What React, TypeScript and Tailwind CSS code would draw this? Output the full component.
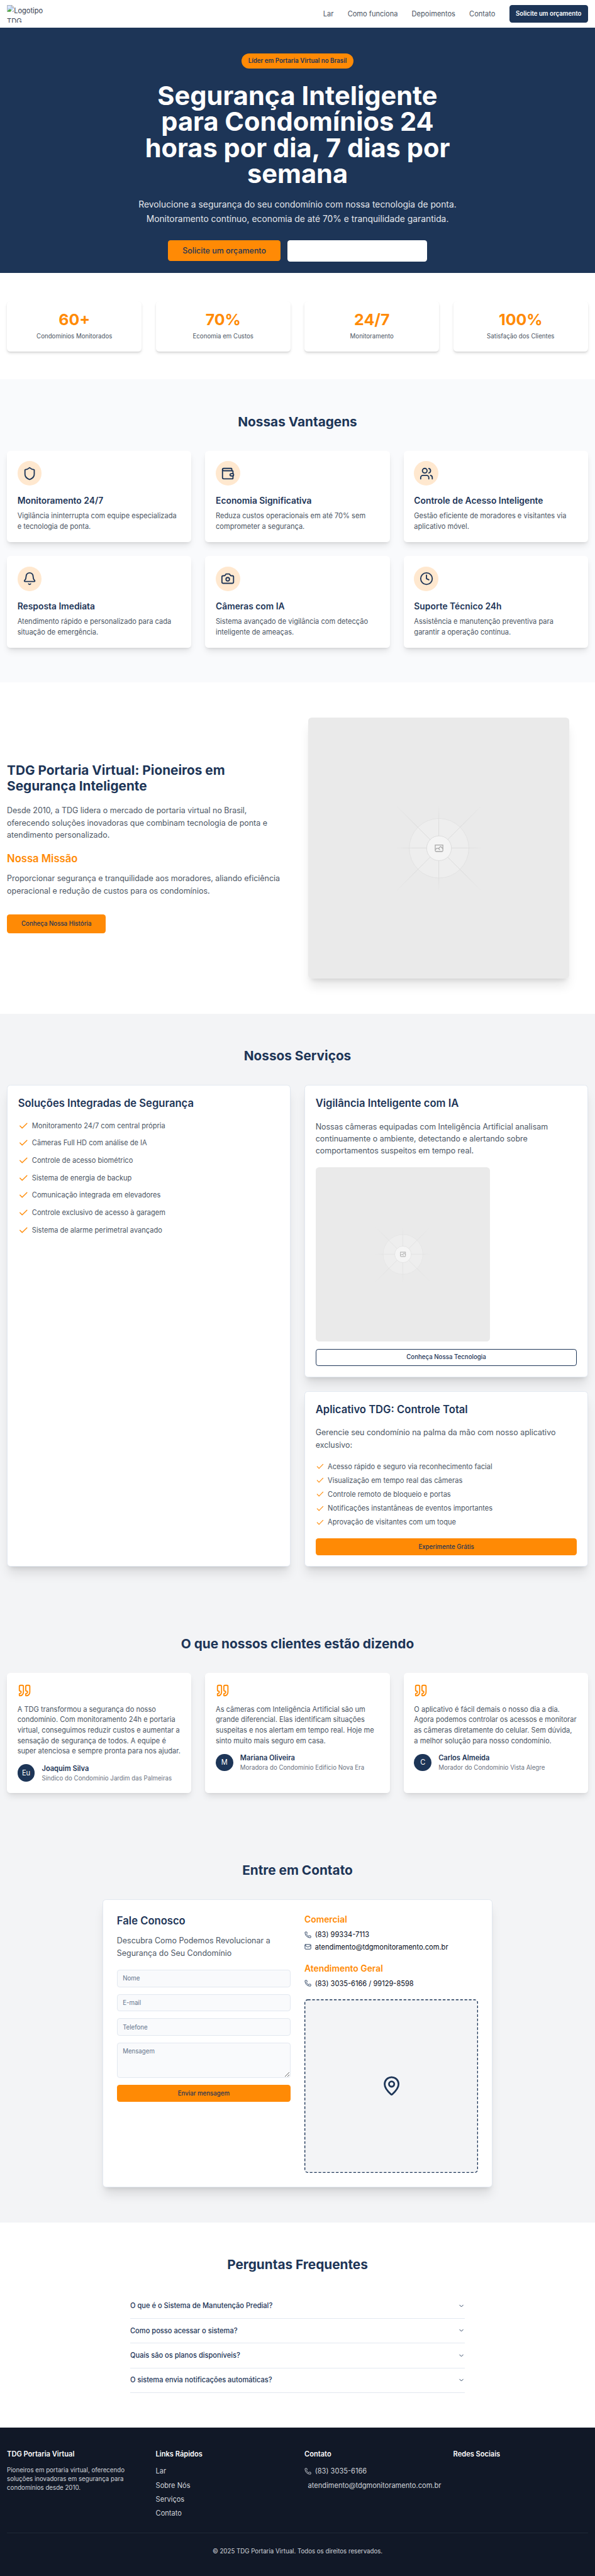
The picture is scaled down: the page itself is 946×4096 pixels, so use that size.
import React from "react";
import {
  Bell,
  Camera,
  Check,
  ChevronDown,
  Clock,
  Mail,
  MapPin,
  Phone,
  Quote,
  Shield,
  Users,
  Wallet,
  type LucideIcon,
} from "lucide-react";

function LogoFallback() {
  return (
    <div className="h-10 w-[104px] overflow-hidden pt-px text-base leading-6 text-[#374151]">
      <svg className="relative -top-[3px] inline-block h-4 w-4 align-baseline" viewBox="0 0 16 16">
        <path d="M.5.5H11L15.500 5V15.500H.5Z" fill="#c5d8f7" stroke="#9a9a9a" />
        <path d="M11 .5V5H15.500Z" fill="#fff" stroke="#9a9a9a" />
        <path d="M2.500 5.500a1.500 1.500 0 0 1 2.500-1.500a1.500 1.500 0 0 1 2.500 1.500Z" fill="#fff" />
        <path d="M1 15C3 9.500 8 8.500 10.500 11.500L8 15Z" fill="#55ad3c" />
        <path d="M8 16L16 7.500V10.500L11 16Z" fill="#fff" />
      </svg>
      Logotipo
      <br />
      TDG
    </div>
  );
}

function PlaceholderArt({ id, className }: { id: string; className: string }) {
  const stops = (
    <>
      <stop stopColor="#C9C9C9" stopOpacity="0" />
      <stop offset=".208" stopColor="#C9C9C9" />
      <stop offset=".792" stopColor="#C9C9C9" />
      <stop offset="1" stopColor="#C9C9C9" stopOpacity="0" />
    </>
  );
  return (
    <svg viewBox="0 0 1200 1200" fill="none" className={className}>
      <defs>
        <linearGradient id={`${id}-h`} gradientUnits="userSpaceOnUse" x1="404" x2="797" y1="600" y2="600">{stops}</linearGradient>
        <linearGradient id={`${id}-v`} gradientUnits="userSpaceOnUse" x1="600" x2="600" y1="404" y2="796">{stops}</linearGradient>
        <linearGradient id={`${id}-d`} gradientUnits="userSpaceOnUse" x1="404" x2="796" y1="404" y2="796">{stops}</linearGradient>
        <linearGradient id={`${id}-u`} gradientUnits="userSpaceOnUse" x1="404" x2="796" y1="796" y2="404">{stops}</linearGradient>
      </defs>
      <rect width="1200" height="1200" fill="#EAEAEA" />
      <g opacity=".5" strokeWidth="2.418">
        <circle cx="600.7" cy="599.9" r="136.600" fill="#FAFAFA" stroke="#C9C9C9" opacity=".5" />
        <path stroke={`url(#${id}-u)`} d="M404.500 796L796 404.500" />
        <path stroke={`url(#${id}-h)`} d="M404.800 598.671L796.600 598.700" />
        <path stroke={`url(#${id}-v)`} d="M599.500 795.700L599.510 404" />
        <path stroke={`url(#${id}-d)`} d="M795.700 796L404.300 404.500" />
        <circle cx="600.7" cy="599.9" r="56.800" fill="#fff" stroke="#C9C9C9" />
        <path
          fill="#666"
          fillRule="evenodd"
          clipRule="evenodd"
          d="M616.426 586.58h-31.434v16.176l3.553-3.554.531-.531h9.068l.074-.074 8.463-8.463h2.565l7.18 7.181V586.58Zm-15.715 14.654 3.698 3.699 1.283 1.282-2.565 2.565-1.282-1.283-5.2-5.199h-6.066l-5.514 5.514-.073.073v2.876a2.418 2.418 0 0 0 2.418 2.418h26.598a2.418 2.418 0 0 0 2.418-2.418v-8.317l-8.463-8.463-7.181 7.181-.071.072Zm-19.347 5.442v4.085a6.045 6.045 0 0 0 6.046 6.045h26.598a6.044 6.044 0 0 0 6.045-6.045v-7.108l1.356-1.355-1.282-1.283-.074-.073v-17.989h-38.689v23.43l-.146.146.146.147Z"
        />
      </g>
    </svg>
  );
}

const navLinks = ["Lar", "Como funciona", "Depoimentos", "Contato"];

const stats = [
  { value: "60+", label: "Condomínios Monitorados" },
  { value: "70%", label: "Economia em Custos" },
  { value: "24/7", label: "Monitoramento" },
  { value: "100%", label: "Satisfação dos Clientes" },
];

const advantages: { icon: LucideIcon; title: string; text: string }[] = [
  { icon: Shield, title: "Monitoramento 24/7", text: "Vigilância ininterrupta com equipe especializada e tecnologia de ponta." },
  { icon: Wallet, title: "Economia Significativa", text: "Reduza custos operacionais em até 70% sem comprometer a segurança." },
  { icon: Users, title: "Controle de Acesso Inteligente", text: "Gestão eficiente de moradores e visitantes via aplicativo móvel." },
  { icon: Bell, title: "Resposta Imediata", text: "Atendimento rápido e personalizado para cada situação de emergência." },
  { icon: Camera, title: "Câmeras com IA", text: "Sistema avançado de vigilância com detecção inteligente de ameaças." },
  { icon: Clock, title: "Suporte Técnico 24h", text: "Assistência e manutenção preventiva para garantir a operação contínua." },
];

const solutions = [
  "Monitoramento 24/7 com central própria",
  "Câmeras Full HD com análise de IA",
  "Controle de acesso biométrico",
  "Sistema de energia de backup",
  "Comunicação integrada em elevadores",
  "Controle exclusivo de acesso à garagem",
  "Sistema de alarme perimetral avançado",
];

const appFeatures = [
  "Acesso rápido e seguro via reconhecimento facial",
  "Visualização em tempo real das câmeras",
  "Controle remoto de bloqueio e portas",
  "Notificações instantâneas de eventos importantes",
  "Aprovação de visitantes com um toque",
];

const testimonials = [
  {
    initial: "Eu",
    name: "Joaquim Silva",
    role: "Síndico do Condomínio Jardim das Palmeiras",
    text: "A TDG transformou a segurança do nosso condomínio. Com monitoramento 24h e portaria virtual, conseguimos reduzir custos e aumentar a sensação de segurança de todos. A equipe é super atenciosa e sempre pronta para nos ajudar.",
  },
  {
    initial: "M",
    name: "Mariana Oliveira",
    role: "Moradora do Condomínio Edifício Nova Era",
    text: "As câmeras com Inteligência Artificial são um grande diferencial. Elas identificam situações suspeitas e nos alertam em tempo real. Hoje me sinto muito mais seguro em casa.",
  },
  {
    initial: "C",
    name: "Carlos Almeida",
    role: "Morador do Condomínio Vista Alegre",
    text: "O aplicativo é fácil demais o nosso dia a dia. Agora podemos controlar os acessos e monitorar as câmeras diretamente do celular. Sem dúvida, a melhor solução para nosso condomínio.",
  },
];

const questions = [
  "O que é o Sistema de Manutenção Predial?",
  "Como posso acessar o sistema?",
  "Quais são os planos disponíveis?",
  "O sistema envia notificações automáticas?",
];

function SectionTitle({ children }: { children: React.ReactNode }) {
  return <h2 className="mb-12 text-center text-3xl leading-9 font-bold text-[#1d3557]">{children}</h2>;
}

const serviceCard = "rounded-lg border border-[#e2e8f0] bg-white p-6 shadow-xl";
const field =
  "block w-full rounded-md border border-[#e2e8f0] bg-[#f9fafc] px-3 py-2 text-sm leading-5 placeholder:text-[#64748b]";

export default function App() {
  return (
    <div className="bg-[#111827] font-['Inter',sans-serif] text-[#020817] [zoom:0.6927]">
      <header className="flex h-16 items-center justify-between bg-white px-4">
        <LogoFallback />
        <nav className="flex items-center gap-8">
          {navLinks.map((link) => (
            <a key={link} className="text-base leading-6 text-[#4b5563]">{link}</a>
          ))}
          <button className="h-10 w-[181px] rounded-md bg-[#1d3557] text-sm font-semibold whitespace-nowrap text-white">
            Solicite um orçamento
          </button>
        </nav>
      </header>

      <section className="flex h-[563px] flex-col items-center bg-[#1d3557] pt-[58px] text-center text-white">
        <span className="rounded-full bg-[#ff8a05] px-4 py-2 text-sm leading-5 font-semibold text-[#1d3557]">
          Líder em Portaria Virtual no Brasil
        </span>
        <h1 className="mt-8 text-6xl leading-[60px] font-bold">
          Segurança Inteligente
          <br />
          para Condomínios 24
          <br />
          horas por dia, 7 dias por
          <br />
          semana
        </h1>
        <p className="mt-6 text-xl leading-[32.5px] text-[#e5e7eb]">
          Revolucione a segurança do seu condomínio com nossa tecnologia de ponta.
          <br />
          Monitoramento contínuo, economia de até 70% e tranquilidade garantida.
        </p>
        <div className="mt-8 flex items-start gap-4">
          <button className="h-12 w-[258px] rounded-md bg-[#ff8a05] text-lg font-medium whitespace-nowrap text-[#1d3557]">
            Solicite um orçamento
          </button>
          <button className="h-[50px] w-80 rounded-md bg-white" />
        </div>
      </section>

      <section className="grid grid-cols-4 gap-8 bg-white px-4 py-16">
        {stats.map((s) => (
          <div key={s.label} className="rounded-lg bg-white p-6 text-center shadow-md">
            <div className="mb-2 text-4xl leading-10 font-bold text-[#ff8a05]">{s.value}</div>
            <div className="text-sm leading-5 text-[#4b5563]">{s.label}</div>
          </div>
        ))}
      </section>

      <section className="bg-[#f9fafc] px-4 py-20">
        <SectionTitle>Nossas Vantagens</SectionTitle>
        <div className="grid grid-cols-3 gap-8">
          {advantages.map(({ icon: Icon, title, text }) => (
            <div key={title} className="rounded-lg bg-white p-6 shadow-lg">
              <div className="w-fit rounded-full bg-[#ffe8cf] p-3">
                <Icon className="h-8 w-8 text-[#1d3557]" />
              </div>
              <h3 className="mt-[22px] mb-2 text-xl leading-7 font-semibold text-[#1d3557]">{title}</h3>
              <p className="text-base leading-6 text-[#4b5563]">{text}</p>
            </div>
          ))}
        </div>
      </section>

      <section className="grid grid-cols-2 items-center gap-12 bg-white px-4 py-20">
        <div>
          <h2 className="mb-6 text-3xl leading-9 font-bold text-[#1d3557]">
            TDG Portaria Virtual: Pioneiros em
            <br />
            Segurança Inteligente
          </h2>
          <p className="mb-6 text-lg leading-7 text-[#4b5563]">
            Desde 2010, a TDG lidera o mercado de portaria virtual no Brasil,
            <br />
            oferecendo soluções inovadoras que combinam tecnologia de ponta e atendimento personalizado.
          </p>
          <h3 className="mb-4 text-2xl leading-8 font-semibold text-[#ff8a05]">Nossa Missão</h3>
          <p className="mb-10 text-lg leading-7 text-[#4b5563]">
            Proporcionar segurança e tranquilidade aos moradores, aliando eficiência operacional e redução de custos
            para os condomínios.
          </p>
          <button className="block h-11 w-[227px] rounded-md bg-[#ff8a05] text-sm font-medium whitespace-nowrap text-[#1d3557]">
            Conheça Nossa História
          </button>
        </div>
        <PlaceholderArt id="about" className="h-[600px] w-[600px] rounded-lg shadow-xl" />
      </section>

      <section className="bg-[#f3f4f6] px-4 py-20">
        <SectionTitle>Nossos Serviços</SectionTitle>
        <div className="grid grid-cols-2 gap-8">
          <div className={`row-span-2 ${serviceCard}`}>
            <h3 className="mb-6 text-2xl leading-8 font-semibold text-[#1d3557]">Soluções Integradas de Segurança</h3>
            <ul className="space-y-4">
              {solutions.map((item) => (
                <li key={item} className="flex items-center gap-2 text-base leading-6 text-[#4b5563]">
                  <Check className="h-6 w-6 text-[#ff8a05]" />
                  {item}
                </li>
              ))}
            </ul>
          </div>
          <div className={serviceCard}>
            <h3 className="mb-6 text-2xl leading-8 font-semibold text-[#1d3557]">Vigilância Inteligente com IA</h3>
            <p className="mb-6 text-lg leading-7 text-[#4b5563]">
              Nossas câmeras equipadas com Inteligência Artificial analisam continuamente o ambiente, detectando e
              alertando sobre comportamentos suspeitos em tempo real.
            </p>
            <PlaceholderArt id="camera" className="mb-4 h-[400px] w-[400px] rounded-lg" />
            <button className="block h-10 w-full rounded-md border border-[#1d3557] bg-white text-sm font-medium text-[#1d3557]">
              Conheça Nossa Tecnologia
            </button>
          </div>
          <div className={serviceCard}>
            <h3 className="mb-6 text-2xl leading-8 font-semibold text-[#1d3557]">Aplicativo TDG: Controle Total</h3>
            <p className="mb-6 text-lg leading-7 text-[#4b5563]">
              Gerencie seu condomínio na palma da mão com nosso aplicativo exclusivo:
            </p>
            <ul className="mb-6 space-y-2">
              {appFeatures.map((item) => (
                <li key={item} className="flex items-center gap-2 text-base leading-6 text-[#4b5563]">
                  <Check className="h-5 w-5 text-[#ff8a05]" />
                  {item}
                </li>
              ))}
            </ul>
            <button className="block h-10 w-full rounded-md bg-[#ff8a05] text-sm font-medium text-[#1d3557]">
              Experimente Grátis
            </button>
          </div>
        </div>
      </section>

      <section className="bg-[#f3f4f6] px-4 py-20">
        <SectionTitle>O que nossos clientes estão dizendo</SectionTitle>
        <div className="grid grid-cols-3 gap-8">
          {testimonials.map((t) => (
            <div key={t.name} className="rounded-lg bg-white p-6 shadow-lg">
              <Quote className="mb-4 h-8 w-8 text-[#ff8a05]" />
              <p className="mb-4 text-base leading-6 text-[#4b5563]">{t.text}</p>
              <div className="flex items-center gap-4">
                <div className="flex h-10 w-10 shrink-0 items-center justify-center rounded-full bg-[#1d3557] text-base text-white">
                  {t.initial}
                </div>
                <div>
                  <div className="text-base leading-6 font-semibold text-[#1d3557]">{t.name}</div>
                  <div className="text-sm leading-5 text-[#6b7280]">{t.role}</div>
                </div>
              </div>
            </div>
          ))}
        </div>
      </section>

      <section className="bg-[#f3f4f6] py-20">
        <SectionTitle>Entre em Contato</SectionTitle>
        <div className="mx-auto grid w-[896px] grid-cols-2 gap-8 rounded-lg border border-[#e2e8f0] bg-white p-8 shadow-xl">
          <div>
            <h3 className="mb-4 text-2xl leading-8 font-semibold text-[#1d3557]">Fale Conosco</h3>
            <p className="mb-6 text-lg leading-7 text-[#4b5563]">
              Descubra Como Podemos Revolucionar a Segurança do Seu Condomínio
            </p>
            <form className="space-y-4">
              <input className={`h-10 ${field}`} placeholder="Nome" />
              <input className={`h-10 ${field}`} placeholder="E-mail" />
              <input className={`h-10 ${field}`} placeholder="Telefone" />
              <textarea className={`h-20 ${field}`} placeholder="Mensagem" />
              <button type="button" className="block h-10 w-full rounded-md bg-[#ff8a05] text-sm font-medium text-[#1d3557]">
                Enviar mensagem
              </button>
            </form>
          </div>
          <div>
            <h4 className="mb-2 text-xl leading-7 font-semibold text-[#ff8a05]">Comercial</h4>
            <div className="mb-1 flex items-center gap-2 text-base leading-6">
              <Phone className="h-4 w-4 text-[#1d3557]" />
              (83) 99334-7113
            </div>
            <div className="mb-6 flex items-center gap-2 text-base leading-6">
              <Mail className="h-4 w-4 text-[#1d3557]" />
              atendimento@tdgmonitoramento.com.br
            </div>
            <h4 className="mb-2 text-xl leading-7 font-semibold text-[#ff8a05]">Atendimento Geral</h4>
            <div className="mb-6 flex items-center gap-2 text-base leading-6">
              <Phone className="h-4 w-4 text-[#1d3557]" />
              (83) 3035-6166 / 99129-8598
            </div>
            <div className="relative flex aspect-square w-full items-center justify-center rounded-lg bg-[#f3f4f6]">
              <svg className="absolute inset-0 h-full w-full" viewBox="0 0 399 399" fill="none">
                <rect x="1" y="1" width="397" height="397" rx="7" stroke="#1d3557" strokeWidth="2" strokeDasharray="6 4" />
              </svg>
              <MapPin className="h-12 w-12 text-[#1d3557]" />
            </div>
          </div>
        </div>
      </section>

      <section className="bg-white py-20">
        <SectionTitle>Perguntas Frequentes</SectionTitle>
        <div className="mx-auto w-[768px]">
          {questions.map((q) => (
            <div
              key={q}
              className="flex h-[57px] items-center justify-between border-b border-[#e2e8f0] text-base leading-6 font-medium text-[#1d3557]"
            >
              {q}
              <ChevronDown className="h-4 w-4" />
            </div>
          ))}
        </div>
      </section>

      <footer className="bg-[#111827] px-4 py-12 text-[#d1d5db]">
        <div className="mb-8 grid grid-cols-4 gap-8">
          <div>
            <h4 className="mb-4 text-base leading-6 font-semibold text-white">TDG Portaria Virtual</h4>
            <p className="text-sm leading-5">
              Pioneiros em portaria virtual, oferecendo soluções inovadoras em segurança para condomínios desde 2010.
            </p>
          </div>
          <div>
            <h4 className="mb-4 text-base leading-6 font-semibold text-white">Links Rápidos</h4>
            <ul className="space-y-2 text-base leading-6">
              <li>Lar</li>
              <li>Sobre Nós</li>
              <li>Serviços</li>
              <li>Contato</li>
            </ul>
          </div>
          <div>
            <h4 className="mb-4 text-base leading-6 font-semibold text-white">Contato</h4>
            <ul className="space-y-2 text-base leading-6">
              <li className="flex items-center gap-2">
                <Phone className="h-4 w-4" />
                (83) 3035-6166
              </li>
              <li className="pl-2 whitespace-nowrap">atendimento@tdgmonitoramento.com.br</li>
            </ul>
          </div>
          <div>
            <h4 className="mb-4 text-base leading-6 font-semibold text-white">Redes Sociais</h4>
          </div>
        </div>
        <div className="border-t border-[#1f2937] pt-8 text-center text-sm leading-5">
          © 2025 TDG Portaria Virtual. Todos os direitos reservados.
        </div>
      </footer>
    </div>
  );
}
